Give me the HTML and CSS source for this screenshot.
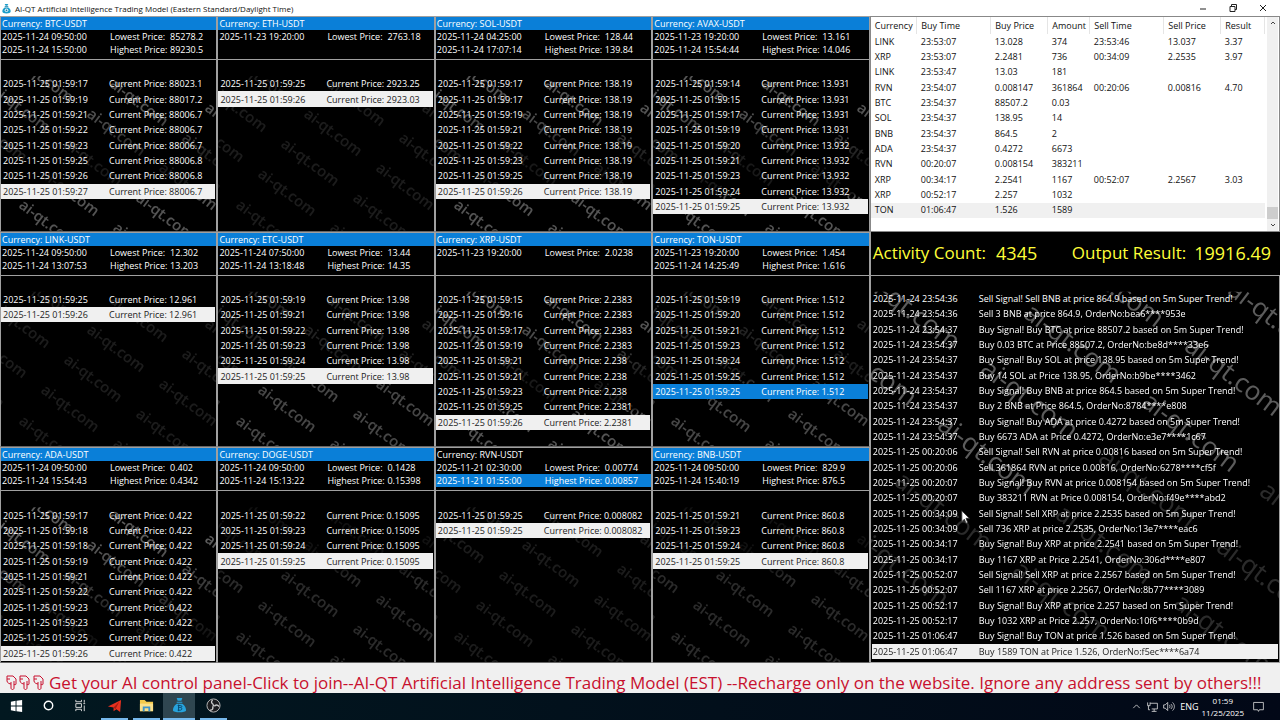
FILE: index.html
```
<!DOCTYPE html>
<html lang="en">
<head>
    <meta charset="UTF-8">
    <meta name="viewport" content="width=device-width, initial-scale=1.0">
    <title>AI-QT Artificial Intelligence Trading Model</title>
    <link rel="stylesheet" href="styles.css">
</head>
<body>

    <!-- Shared watermark drawings -->
    <svg class="defs" width="0" height="0" aria-hidden="true">
        <defs>
            <text id="word" transform="rotate(37)">ai-qt.com</text>
            <g id="mark" class="mark">
                <use href="#word" transform="translate(13 2)"/>
                <use href="#word" transform="translate(108 26)"/>
                <use href="#word" transform="translate(203 50)"/>
                <use href="#word" transform="translate(-10 32)"/>
                <use href="#word" transform="translate(85 56)"/>
                <use href="#word" transform="translate(180 80)"/>
                <use href="#word" transform="translate(-33 62)"/>
                <use href="#word" transform="translate(62 86)"/>
                <use href="#word" transform="translate(157 110)"/>
                <use href="#word" transform="translate(-56 92)"/>
                <use href="#word" transform="translate(39 116)"/>
                <use href="#word" transform="translate(134 140)"/>
                <use href="#word" transform="translate(17 147)"/>
                <use href="#word" transform="translate(111 170)"/>
            </g>
        </defs>
    </svg>

    <!-- Title bar -->
    <header class="titlebar">
        <svg class="app-icon" viewBox="0 0 20 22"><path d="M6 1h8l-2 4H8z" fill="#1c9cc9"/><path d="M6 6h8v2H6z" fill="#0f7ca8"/><path d="M6 9h8c4 3 6 6 5 10-1 2-3 3-9 3s-8-1-9-3C0 15 2 12 6 9z" fill="#1c9cc9"/><circle cx="10" cy="15" r="4" fill="#e8f6fb"/><circle cx="10" cy="15" r="2" fill="#0f7ca8"/></svg>
        <h1>AI-QT Artificial Intelligence Trading Model (Eastern Standard/Daylight Time)</h1>
        <div class="window-btns">
            <button aria-label="Minimize"><svg viewBox="0 0 10 10"><path d="M2 6h6"/></svg></button>
            <button aria-label="Restore"><svg viewBox="0 0 10 10"><path d="M2 3.500h5v5H2zM3.500 3.500v-2h5v5H7"/></svg></button>
            <button aria-label="Close"><svg viewBox="0 0 10 10"><path d="M2 2l6 6M8 2l-6 6"/></svg></button>
        </div>
    </header>

    <main class="main-content">
        <!-- Currency panels -->
        <div class="currencies">
            <section class="panel">
                <ul class="summary">
                    <li class="active">Currency: BTC-USDT</li>
                    <li><span>2025-11-24 09:50:00</span><span>Lowest Price:</span><span>85278.2</span></li>
                    <li><span>2025-11-24 15:50:00</span><span>Highest Price:</span><span>89230.5</span></li>
                </ul>
                <ul class="prices">
                    <svg class="watermark fade"><use href="#mark"/></svg>
                    <li><span>2025-11-25 01:59:17</span><span>Current Price: 88023.1</span></li>
                    <li><span>2025-11-25 01:59:19</span><span>Current Price: 88017.2</span></li>
                    <li><span>2025-11-25 01:59:21</span><span>Current Price: 88006.7</span></li>
                    <li><span>2025-11-25 01:59:22</span><span>Current Price: 88006.7</span></li>
                    <li><span>2025-11-25 01:59:23</span><span>Current Price: 88006.7</span></li>
                    <li><span>2025-11-25 01:59:25</span><span>Current Price: 88006.8</span></li>
                    <li><span>2025-11-25 01:59:26</span><span>Current Price: 88006.8</span></li>
                    <li class="last"><span>2025-11-25 01:59:27</span><span>Current Price: 88006.7</span></li>
                </ul>
            </section>
            <section class="panel">
                <ul class="summary">
                    <li class="active">Currency: ETH-USDT</li>
                    <li><span>2025-11-23 19:20:00</span><span>Lowest Price:</span><span>2763.18</span></li>
                </ul>
                <ul class="prices">
                    <svg class="watermark dim"><use href="#mark"/></svg>
                    <li><span>2025-11-25 01:59:25</span><span>Current Price: 2923.25</span></li>
                    <li class="last"><span>2025-11-25 01:59:26</span><span>Current Price: 2923.03</span></li>
                </ul>
            </section>
            <section class="panel">
                <ul class="summary">
                    <li class="active">Currency: SOL-USDT</li>
                    <li><span>2025-11-24 04:25:00</span><span>Lowest Price:</span><span>128.44</span></li>
                    <li><span>2025-11-24 17:07:14</span><span>Highest Price:</span><span>139.84</span></li>
                </ul>
                <ul class="prices">
                    <svg class="watermark fade"><use href="#mark"/></svg>
                    <li><span>2025-11-25 01:59:17</span><span>Current Price: 138.19</span></li>
                    <li><span>2025-11-25 01:59:17</span><span>Current Price: 138.19</span></li>
                    <li><span>2025-11-25 01:59:19</span><span>Current Price: 138.19</span></li>
                    <li><span>2025-11-25 01:59:21</span><span>Current Price: 138.19</span></li>
                    <li><span>2025-11-25 01:59:22</span><span>Current Price: 138.19</span></li>
                    <li><span>2025-11-25 01:59:23</span><span>Current Price: 138.19</span></li>
                    <li><span>2025-11-25 01:59:25</span><span>Current Price: 138.19</span></li>
                    <li class="last"><span>2025-11-25 01:59:26</span><span>Current Price: 138.19</span></li>
                </ul>
            </section>
            <section class="panel">
                <ul class="summary">
                    <li class="active">Currency: AVAX-USDT</li>
                    <li><span>2025-11-23 19:20:00</span><span>Lowest Price:</span><span>13.161</span></li>
                    <li><span>2025-11-24 15:54:44</span><span>Highest Price:</span><span>14.046</span></li>
                </ul>
                <ul class="prices">
                    <svg class="watermark fade"><use href="#mark"/></svg>
                    <li><span>2025-11-25 01:59:14</span><span>Current Price: 13.931</span></li>
                    <li><span>2025-11-25 01:59:15</span><span>Current Price: 13.931</span></li>
                    <li><span>2025-11-25 01:59:17</span><span>Current Price: 13.931</span></li>
                    <li><span>2025-11-25 01:59:19</span><span>Current Price: 13.931</span></li>
                    <li><span>2025-11-25 01:59:20</span><span>Current Price: 13.932</span></li>
                    <li><span>2025-11-25 01:59:21</span><span>Current Price: 13.932</span></li>
                    <li><span>2025-11-25 01:59:23</span><span>Current Price: 13.932</span></li>
                    <li><span>2025-11-25 01:59:24</span><span>Current Price: 13.932</span></li>
                    <li class="last"><span>2025-11-25 01:59:25</span><span>Current Price: 13.932</span></li>
                </ul>
            </section>
            <section class="panel">
                <ul class="summary">
                    <li class="active">Currency: LINK-USDT</li>
                    <li><span>2025-11-24 09:50:00</span><span>Lowest Price:</span><span>12.302</span></li>
                    <li><span>2025-11-24 13:07:53</span><span>Highest Price:</span><span>13.203</span></li>
                </ul>
                <ul class="prices">
                    <svg class="watermark dim"><use href="#mark"/></svg>
                    <li><span>2025-11-25 01:59:25</span><span>Current Price: 12.961</span></li>
                    <li class="last"><span>2025-11-25 01:59:26</span><span>Current Price: 12.961</span></li>
                </ul>
            </section>
            <section class="panel">
                <ul class="summary">
                    <li class="active">Currency: ETC-USDT</li>
                    <li><span>2025-11-24 07:50:00</span><span>Lowest Price:</span><span>13.44</span></li>
                    <li><span>2025-11-24 13:18:48</span><span>Highest Price:</span><span>14.35</span></li>
                </ul>
                <ul class="prices">
                    <svg class="watermark rise"><use href="#mark"/></svg>
                    <li><span>2025-11-25 01:59:19</span><span>Current Price: 13.98</span></li>
                    <li><span>2025-11-25 01:59:21</span><span>Current Price: 13.98</span></li>
                    <li><span>2025-11-25 01:59:22</span><span>Current Price: 13.98</span></li>
                    <li><span>2025-11-25 01:59:23</span><span>Current Price: 13.98</span></li>
                    <li><span>2025-11-25 01:59:24</span><span>Current Price: 13.98</span></li>
                    <li class="last"><span>2025-11-25 01:59:25</span><span>Current Price: 13.98</span></li>
                </ul>
            </section>
            <section class="panel">
                <ul class="summary">
                    <li class="active">Currency: XRP-USDT</li>
                    <li><span>2025-11-23 19:20:00</span><span>Lowest Price:</span><span>2.0238</span></li>
                </ul>
                <ul class="prices">
                    <svg class="watermark fade"><use href="#mark"/></svg>
                    <li><span>2025-11-25 01:59:15</span><span>Current Price: 2.2383</span></li>
                    <li><span>2025-11-25 01:59:16</span><span>Current Price: 2.2383</span></li>
                    <li><span>2025-11-25 01:59:17</span><span>Current Price: 2.2383</span></li>
                    <li><span>2025-11-25 01:59:19</span><span>Current Price: 2.2383</span></li>
                    <li><span>2025-11-25 01:59:21</span><span>Current Price: 2.238</span></li>
                    <li><span>2025-11-25 01:59:21</span><span>Current Price: 2.238</span></li>
                    <li><span>2025-11-25 01:59:23</span><span>Current Price: 2.238</span></li>
                    <li><span>2025-11-25 01:59:25</span><span>Current Price: 2.2381</span></li>
                    <li class="last"><span>2025-11-25 01:59:26</span><span>Current Price: 2.2381</span></li>
                </ul>
            </section>
            <section class="panel">
                <ul class="summary">
                    <li class="active">Currency: TON-USDT</li>
                    <li><span>2025-11-23 19:20:00</span><span>Lowest Price:</span><span>1.454</span></li>
                    <li><span>2025-11-24 14:25:49</span><span>Highest Price:</span><span>1.616</span></li>
                </ul>
                <ul class="prices">
                    <svg class="watermark rise"><use href="#mark"/></svg>
                    <li><span>2025-11-25 01:59:19</span><span>Current Price: 1.512</span></li>
                    <li><span>2025-11-25 01:59:20</span><span>Current Price: 1.512</span></li>
                    <li><span>2025-11-25 01:59:21</span><span>Current Price: 1.512</span></li>
                    <li><span>2025-11-25 01:59:23</span><span>Current Price: 1.512</span></li>
                    <li><span>2025-11-25 01:59:24</span><span>Current Price: 1.512</span></li>
                    <li><span>2025-11-25 01:59:25</span><span>Current Price: 1.512</span></li>
                    <li class="active"><span>2025-11-25 01:59:25</span><span>Current Price: 1.512</span></li>
                </ul>
            </section>
            <section class="panel">
                <ul class="summary">
                    <li class="active">Currency: ADA-USDT</li>
                    <li><span>2025-11-24 09:50:00</span><span>Lowest Price:</span><span>0.402</span></li>
                    <li><span>2025-11-24 15:54:43</span><span>Highest Price:</span><span>0.4342</span></li>
                </ul>
                <ul class="prices">
                    <svg class="watermark sink"><use href="#mark"/></svg>
                    <li><span>2025-11-25 01:59:17</span><span>Current Price: 0.422</span></li>
                    <li><span>2025-11-25 01:59:18</span><span>Current Price: 0.422</span></li>
                    <li><span>2025-11-25 01:59:18</span><span>Current Price: 0.422</span></li>
                    <li><span>2025-11-25 01:59:19</span><span>Current Price: 0.422</span></li>
                    <li><span>2025-11-25 01:59:21</span><span>Current Price: 0.422</span></li>
                    <li><span>2025-11-25 01:59:22</span><span>Current Price: 0.422</span></li>
                    <li><span>2025-11-25 01:59:23</span><span>Current Price: 0.422</span></li>
                    <li><span>2025-11-25 01:59:23</span><span>Current Price: 0.422</span></li>
                    <li><span>2025-11-25 01:59:25</span><span>Current Price: 0.422</span></li>
                    <li class="last"><span>2025-11-25 01:59:26</span><span>Current Price: 0.422</span></li>
                </ul>
            </section>
            <section class="panel">
                <ul class="summary">
                    <li class="active">Currency: DOGE-USDT</li>
                    <li><span>2025-11-24 09:50:00</span><span>Lowest Price:</span><span>0.1428</span></li>
                    <li><span>2025-11-24 15:13:22</span><span>Highest Price:</span><span>0.15398</span></li>
                </ul>
                <ul class="prices">
                    <svg class="watermark low"><use href="#mark"/></svg>
                    <li><span>2025-11-25 01:59:22</span><span>Current Price: 0.15095</span></li>
                    <li><span>2025-11-25 01:59:23</span><span>Current Price: 0.15095</span></li>
                    <li><span>2025-11-25 01:59:24</span><span>Current Price: 0.15095</span></li>
                    <li class="last"><span>2025-11-25 01:59:25</span><span>Current Price: 0.15095</span></li>
                </ul>
            </section>
            <section class="panel">
                <ul class="summary">
                    <li>Currency: RVN-USDT</li>
                    <li><span>2025-11-21 02:30:00</span><span>Lowest Price:</span><span>0.00774</span></li>
                    <li class="active"><span>2025-11-21 01:55:00</span><span>Highest Price:</span><span>0.00857</span></li>
                </ul>
                <ul class="prices">
                    <svg class="watermark dim"><use href="#mark"/></svg>
                    <li><span>2025-11-25 01:59:25</span><span>Current Price: 0.008082</span></li>
                    <li class="last"><span>2025-11-25 01:59:25</span><span>Current Price: 0.008082</span></li>
                </ul>
            </section>
            <section class="panel">
                <ul class="summary">
                    <li class="active">Currency: BNB-USDT</li>
                    <li><span>2025-11-24 09:50:00</span><span>Lowest Price:</span><span>829.9</span></li>
                    <li><span>2025-11-24 15:40:19</span><span>Highest Price:</span><span>876.5</span></li>
                </ul>
                <ul class="prices">
                    <svg class="watermark low"><use href="#mark"/></svg>
                    <li><span>2025-11-25 01:59:21</span><span>Current Price: 860.8</span></li>
                    <li><span>2025-11-25 01:59:23</span><span>Current Price: 860.8</span></li>
                    <li><span>2025-11-25 01:59:24</span><span>Current Price: 860.8</span></li>
                    <li class="last"><span>2025-11-25 01:59:25</span><span>Current Price: 860.8</span></li>
                </ul>
            </section>
        </div>

        <div class="side">
            <!-- Trades -->
            <div class="trades">
                <table>
                    <colgroup>
                        <col class="c-currency"><col class="c-time"><col class="c-price"><col class="c-amount"><col class="c-time"><col class="c-price"><col>
                    </colgroup>
                    <thead>
                        <tr><th>Currency</th><th>Buy Time</th><th>Buy Price</th><th>Amount</th><th>Sell Time</th><th>Sell Price</th><th>Result</th></tr>
                    </thead>
                    <tbody>
                        <tr><td>LINK</td><td>23:53:07</td><td>13.028</td><td>374</td><td>23:53:46</td><td>13.037</td><td>3.37</td></tr>
                        <tr><td>XRP</td><td>23:53:07</td><td>2.2481</td><td>736</td><td>00:34:09</td><td>2.2535</td><td>3.97</td></tr>
                        <tr><td>LINK</td><td>23:53:47</td><td>13.03</td><td>181</td><td></td><td></td><td></td></tr>
                        <tr><td>RVN</td><td>23:54:07</td><td>0.008147</td><td>361864</td><td>00:20:06</td><td>0.00816</td><td>4.70</td></tr>
                        <tr><td>BTC</td><td>23:54:37</td><td>88507.2</td><td>0.03</td><td></td><td></td><td></td></tr>
                        <tr><td>SOL</td><td>23:54:37</td><td>138.95</td><td>14</td><td></td><td></td><td></td></tr>
                        <tr><td>BNB</td><td>23:54:37</td><td>864.5</td><td>2</td><td></td><td></td><td></td></tr>
                        <tr><td>ADA</td><td>23:54:37</td><td>0.4272</td><td>6673</td><td></td><td></td><td></td></tr>
                        <tr><td>RVN</td><td>00:20:07</td><td>0.008154</td><td>383211</td><td></td><td></td><td></td></tr>
                        <tr><td>XRP</td><td>00:34:17</td><td>2.2541</td><td>1167</td><td>00:52:07</td><td>2.2567</td><td>3.03</td></tr>
                        <tr><td>XRP</td><td>00:52:17</td><td>2.257</td><td>1032</td><td></td><td></td><td></td></tr>
                        <tr class="last"><td>TON</td><td>01:06:47</td><td>1.526</td><td>1589</td><td></td><td></td><td></td></tr>
                    </tbody>
                </table>
                <div class="scrollbar">
                    <button aria-label="Scroll up"><svg viewBox="0 0 10 10"><path d="M3 6l2-2 2 2"/></svg></button>
                    <div class="thumb"></div>
                    <button aria-label="Scroll down"><svg viewBox="0 0 10 10"><path d="M3 4l2 2 2-2"/></svg></button>
                </div>
            </div>

            <!-- Totals -->
            <div class="totals">
                <span>Activity Count:</span><strong>4345</strong>
                <span class="result-label">Output Result:</span><strong>19916.49</strong>
            </div>

            <!-- Log -->
            <ul class="log">
                <svg class="watermark">
                    <g class="mark-big">
                        <use href="#word" transform="translate(194 -16)"/>
                        <use href="#word" transform="translate(355 17)"/>
                        <use href="#word" transform="translate(-10 7)"/>
                        <use href="#word" transform="translate(151 40)"/>
                        <use href="#word" transform="translate(312 73)"/>
                        <use href="#word" transform="translate(-53 63)"/>
                        <use href="#word" transform="translate(108 96)"/>
                        <use href="#word" transform="translate(269 129)"/>
                        <use href="#word" transform="translate(65 152)"/>
                    </g>
                    <g class="mark-big faint">
                        <use href="#word" transform="translate(226 185)"/>
                        <use href="#word" transform="translate(387 218)"/>
                        <use href="#word" transform="translate(22 208)"/>
                        <use href="#word" transform="translate(183 241)"/>
                        <use href="#word" transform="translate(344 274)"/>
                        <use href="#word" transform="translate(-21 264)"/>
                        <use href="#word" transform="translate(140 297)"/>
                        <use href="#word" transform="translate(301 330)"/>
                    </g>
                </svg>
                <li><span>2025-11-24 23:54:36</span><span>Sell Signal! Sell BNB at price 864.9 based on 5m Super Trend!</span></li>
                <li><span>2025-11-24 23:54:36</span><span>Sell 3 BNB at price 864.9, OrderNo:bea6****953e</span></li>
                <li><span>2025-11-24 23:54:37</span><span>Buy Signal! Buy BTC at price 88507.2 based on 5m Super Trend!</span></li>
                <li><span>2025-11-24 23:54:37</span><span>Buy 0.03 BTC at Price 88507.2, OrderNo:be8d****33e6</span></li>
                <li><span>2025-11-24 23:54:37</span><span>Buy Signal! Buy SOL at price 138.95 based on 5m Super Trend!</span></li>
                <li><span>2025-11-24 23:54:37</span><span>Buy 14 SOL at Price 138.95, OrderNo:b9be****3462</span></li>
                <li><span>2025-11-24 23:54:37</span><span>Buy Signal! Buy BNB at price 864.5 based on 5m Super Trend!</span></li>
                <li><span>2025-11-24 23:54:37</span><span>Buy 2 BNB at Price 864.5, OrderNo:8784****e808</span></li>
                <li><span>2025-11-24 23:54:37</span><span>Buy Signal! Buy ADA at price 0.4272 based on 5m Super Trend!</span></li>
                <li><span>2025-11-24 23:54:37</span><span>Buy 6673 ADA at Price 0.4272, OrderNo:e3e7****1c67</span></li>
                <li><span>2025-11-25 00:20:06</span><span>Sell Signal! Sell RVN at price 0.00816 based on 5m Super Trend!</span></li>
                <li><span>2025-11-25 00:20:06</span><span>Sell 361864 RVN at price 0.00816, OrderNo:6278****cf5f</span></li>
                <li><span>2025-11-25 00:20:07</span><span>Buy Signal! Buy RVN at price 0.008154 based on 5m Super Trend!</span></li>
                <li><span>2025-11-25 00:20:07</span><span>Buy 383211 RVN at Price 0.008154, OrderNo:f49e****abd2</span></li>
                <li><span>2025-11-25 00:34:09</span><span>Sell Signal! Sell XRP at price 2.2535 based on 5m Super Trend!</span></li>
                <li><span>2025-11-25 00:34:09</span><span>Sell 736 XRP at price 2.2535, OrderNo:13e7****eac6</span></li>
                <li><span>2025-11-25 00:34:17</span><span>Buy Signal! Buy XRP at price 2.2541 based on 5m Super Trend!</span></li>
                <li><span>2025-11-25 00:34:17</span><span>Buy 1167 XRP at Price 2.2541, OrderNo:306d****e807</span></li>
                <li><span>2025-11-25 00:52:07</span><span>Sell Signal! Sell XRP at price 2.2567 based on 5m Super Trend!</span></li>
                <li><span>2025-11-25 00:52:07</span><span>Sell 1167 XRP at price 2.2567, OrderNo:8b77****3089</span></li>
                <li><span>2025-11-25 00:52:17</span><span>Buy Signal! Buy XRP at price 2.257 based on 5m Super Trend!</span></li>
                <li><span>2025-11-25 00:52:17</span><span>Buy 1032 XRP at Price 2.257, OrderNo:10f6****0b9d</span></li>
                <li><span>2025-11-25 01:06:47</span><span>Buy Signal! Buy TON at price 1.526 based on 5m Super Trend!</span></li>
                <li class="last"><span>2025-11-25 01:06:47</span><span>Buy 1589 TON at Price 1.526, OrderNo:f5ec****6a74</span></li>
                <svg class="cursor" viewBox="0 0 12 18"><path d="M1 1v13l3-3 2 5 2-1-2-5h4z" fill="#fff" stroke="#333"/></svg>
            </ul>
        </div>
    </main>

    <!-- Announcement -->
    <a class="notice" href="#">
        <svg class="hands" viewBox="0 0 38 16">
            <g id="hand"><path d="M1 1h6l3 3v5c0 1-2 1-2 0v4c0 2-3 2-3 0V9C4 9 1 8 1 6zM5 9V7M8 9V6M1 4h3"/></g>
            <use href="#hand" x="13"/><use href="#hand" x="27"/>
        </svg>
        <span>Get your AI control panel-Click to join--AI-QT Artificial Intelligence Trading Model (EST) --Recharge only on the website. Ignore any address sent by others!!!</span>
    </a>

    <!-- Taskbar -->
    <footer class="taskbar">
        <button aria-label="Start"><svg viewBox="0 0 16 16"><path d="M2 4l5-1v5H2zM8 3l6-1v6H8zM2 9h5v5l-5-1zM8 9h6v6l-6-1z" fill="#fff"/></svg></button>
        <button aria-label="Search"><svg viewBox="0 0 16 16"><circle cx="8" cy="8" r="4.500" fill="none" stroke="#fff" stroke-width="1.500"/></svg></button>
        <button aria-label="Task view"><svg viewBox="0 0 16 16"><path d="M3 2v2h6V2M3 14v-2h6v2M3 6h6v4H3zM12 2v3M12 8v6M11 6h2" fill="none" stroke="#ddd"/></svg></button>
        <button class="open" aria-label="Telegram"><svg viewBox="0 0 16 16"><path d="M1 9l14-7-1 13-4-3-3 2V10z" fill="#e8311f"/><path d="M7 10l6-6-4 8z" fill="#a81d12"/></svg></button>
        <button class="open" aria-label="File Explorer"><svg viewBox="0 0 16 16"><path d="M1 2h5l2 2h7v10H1z" fill="#f3c94b"/><path d="M1 6h14v8H1z" fill="#fbe08a"/><path d="M4 14V9h8v5h-2v-3H6v3z" fill="#3f94c9"/></svg></button>
        <button class="open current" aria-label="AI-QT"><svg viewBox="0 0 16 16"><path d="M5 0h6l-1 3H6zM5 4h6v1H5zM5 6h6c3 2 4 5 4 7 0 3-14 3-14 0 0-2 1-5 4-7z" fill="#27a3dc"/><path d="M6 8h3c2 0 2 2 0 2 2 0 2 3 0 3H6M7 7v7M7 10h2" fill="none" stroke="#0b4a70"/></svg></button>
        <button class="open" aria-label="OBS Studio"><svg viewBox="0 0 16 16"><circle cx="8" cy="8" r="7" fill="#1c1c1f" stroke="#bbb"/><path d="M7 2c-2 2-1 4 1 5M14 9c-2-2-4-2-5 0M4 13c3 0 4-2 3-4" fill="none" stroke="#ccc" stroke-width="1.500"/><circle cx="8" cy="8" r="1" fill="#ccc"/></svg></button>
        <div class="tray">
            <svg viewBox="0 0 16 16"><path d="M4 10l4-4 4 4"/></svg>
            <svg viewBox="0 0 16 16"><path d="M5 4h9v7H7M10 11v3M7 14h6M2 3v4h3V3M3 7v5h2"/></svg>
            <svg viewBox="0 0 16 16"><path d="M2 6h2l3-3v10l-3-3H2zM9 6c1 1 1 3 0 4M11 5c2 2 2 4 0 6M13 3c3 3 3 7 0 10"/></svg>
            <span class="lang">ENG</span>
            <div class="clock"><span>01:59</span><span>11/25/2025</span></div>
            <svg viewBox="0 0 16 16"><path d="M2 3h12v9H9l-1 2-1-2H2z"/></svg>
        </div>
    </footer>

</body>
</html>
```
FILE: styles.css
```
* {
    box-sizing: border-box;
}

body {
    margin: 0;
    height: 100vh;
    display: flex;
    flex-direction: column;
    font-family: 'Open Sans', 'Noto Sans', sans-serif;
    font-size: 9px;
    line-height: 13px;
    background-color: #f0f0f0;
    color: #111;
    overflow: hidden;
    white-space: nowrap;
}

ul {
    list-style: none;
    margin: 0;
    padding: 0;
}

button {
    border: 0;
    padding: 0;
    background: none;
    display: flex;
    align-items: center;
    justify-content: center;
}

.defs {
    position: absolute;
}

/* Title bar */
.titlebar {
    height: 16px;
    flex: none;
    display: flex;
    align-items: center;
    background-color: #fff;
    padding: 0 2px;
}

.titlebar h1 {
    margin: 0 auto 0 4px;
    font-size: 8px;
    font-weight: 400;
}

.app-icon {
    width: 9px;
    height: 11px;
}

.window-btns {
    display: flex;
}

.window-btns button {
    width: 30px;
    height: 14px;
}

.window-btns svg {
    width: 10px;
    height: 10px;
    fill: none;
    stroke: #222;
}

.main-content {
    flex: 1;
    min-height: 0;
    display: grid;
    grid-template-columns: 212fr 100fr;
    background-color: #000;
}

/* Currency panels */
.currencies {
    display: grid;
    grid-template-columns: repeat(4, 1fr);
    grid-template-rows: repeat(3, 1fr);
    min-height: 0;
}

.panel {
    display: flex;
    flex-direction: column;
    min-width: 0;
    background-color: #000;
    color: #fff;
    border: 1px solid #a0a0a0;
    border-bottom-color: #666;
}

.summary {
    height: 43px;
    border-bottom: 1px solid #a0a0a0;
}

.summary li {
    height: 13px;
    padding-left: 1px;
    display: grid;
    grid-template-columns: 108px 60px 1fr;
}

.panel .active {
    background-color: #0a7fd8;
}

.prices {
    flex: 1;
    position: relative;
    display: grid;
    grid-template-rows: repeat(10, 1fr);
    padding: 16px 1px 1px 0;
}

.prices li {
    position: relative;
    display: grid;
    grid-template-columns: 106px 1fr;
    align-items: center;
    padding-left: 2px;
}

.prices .last,
.log .last {
    background-color: #f0f0f0;
    color: #222;
}

/* Watermark behind the rows */
.watermark {
    position: absolute;
    top: 0;
    left: 0;
    width: 100%;
    height: 100%;
    clip-path: inset(16px 0 0 0);
    fill: #fff;
}

.mark {
    font-size: 15px;
    font-weight: 600;
}

.mark-big {
    font-size: 26px;
    opacity: 0.36;
}

.mark-big.faint {
    opacity: 0.17;
}

.dim {
    opacity: 0.11;
}

.fade {
    opacity: 0.33;
    mask-image: linear-gradient(#000 30%, rgba(0, 0, 0, 0.3) 60%, rgba(0, 0, 0, 0.3) 78%, #000 80%);
}

.rise {
    opacity: 0.28;
    mask-image: linear-gradient(rgba(0, 0, 0, 0.6), rgba(0, 0, 0, 0.4) 60%, #000 65%);
}

.low {
    opacity: 0.17;
    mask-image: linear-gradient(rgba(0, 0, 0, 0.4) 45%, #000 50%);
}

.sink {
    opacity: 0.36;
    mask-image: linear-gradient(#000 30%, rgba(0, 0, 0, 0.2) 85%);
}

/* Right side */
.side {
    display: flex;
    flex-direction: column;
    min-width: 0;
    min-height: 0;
}

.trades {
    flex: 0 0 33.333%;
    display: flex;
    background-color: #fff;
    border: 1px solid #888;
    padding-right: 1px;
}

.trades table {
    flex: 1;
    height: 201px;
    table-layout: fixed;
    border-collapse: collapse;
}

.trades th,
.trades td {
    padding: 0 0 0 4px;
    text-align: left;
    font-weight: 400;
    line-height: 12px;
}

.trades th {
    height: 17px;
    border-right: 1px solid #e5e5e5;
}

.trades .last {
    background-color: #f0f0f0;
}

.c-currency {
    width: 46px;
}

.c-time {
    width: 74px;
}

.c-price {
    width: 57px;
}

.c-amount {
    width: 42px;
}

.scrollbar {
    width: 11px;
    margin-left: 2px;
    display: flex;
    flex-direction: column;
    background-color: #f0f0f0;
}

.scrollbar button {
    height: 12px;
}

.scrollbar svg {
    width: 10px;
    height: 10px;
    fill: none;
    stroke: #444;
}

.thumb {
    height: 12px;
    margin-top: auto;
    background-color: #cdcdcd;
}

.totals {
    flex: 0 0 43px;
    display: flex;
    align-items: center;
    padding: 0 9px 0 2px;
    font-size: 17px;
    line-height: 24px;
    color: #ffff38;
    border-left: 1px solid #a0a0a0;
}

.totals strong {
    font-size: 18px;
    font-weight: 400;
}

.totals span {
    margin-right: 10px;
}

.totals .result-label {
    margin: 0 8px 0 auto;
}

.log {
    flex: 1;
    position: relative;
    display: grid;
    grid-template-rows: repeat(24, 1fr);
    padding: 15px 1px 3px 1px;
    border: 1px solid #a0a0a0;
    color: #fff;
    overflow: hidden;
}

.log li {
    position: relative;
    display: grid;
    grid-template-columns: 106px 1fr;
    align-items: center;
    padding-left: 1px;
    min-height: 0;
}

.cursor {
    position: absolute;
    left: 90px;
    top: 234px;
    width: 10px;
    height: 15px;
}

/* Announcement */
.notice {
    height: 30px;
    flex: none;
    display: flex;
    align-items: center;
    gap: 5px;
    padding: 9px 0 0 6px;
    font-size: 17px;
    line-height: 20px;
    color: #c8102e;
    text-decoration: none;
}

.hands {
    width: 38px;
    height: 16px;
    fill: none;
    stroke: #c8102e;
}

/* Taskbar */
.taskbar {
    height: 27px;
    flex: none;
    display: flex;
    background: linear-gradient(90deg, #021820, #020817);
    color: #fff;
}

.taskbar button {
    width: 32px;
    border-bottom: 2px solid transparent;
}

.taskbar button svg {
    width: 15px;
    height: 15px;
}

.taskbar .open {
    width: 27px;
    margin-left: 5px;
    border-bottom-color: #76b9ed;
}

.taskbar .current {
    width: 32px;
    margin-left: 3px;
    background-color: #2f4650;
}

.tray {
    margin-left: auto;
    display: flex;
    align-items: center;
    gap: 3px;
    padding-right: 15px;
}

.tray svg {
    width: 13px;
    height: 13px;
    fill: none;
    stroke: #ddd;
}

.tray .lang {
    margin-left: 2px;
    font-size: 9px;
}

.clock {
    display: flex;
    flex-direction: column;
    align-items: center;
    margin: 0 5px 0 0;
    font-size: 8px;
    line-height: 12px;
}
```
